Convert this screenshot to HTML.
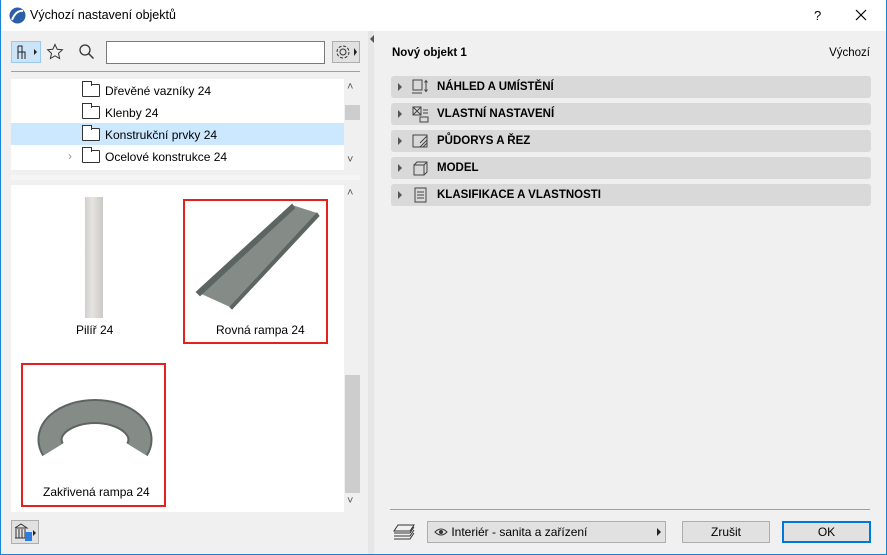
<!DOCTYPE html>
<html><head><meta charset="utf-8"><style>
*{margin:0;padding:0;box-sizing:border-box}
body{width:887px;height:555px;overflow:hidden;font-family:"Liberation Sans",sans-serif;font-size:12px;color:#000;background:#f0f0f0;position:relative}
.abs{position:absolute}
.row{position:absolute;left:391px;width:480px;height:22px;background:#d9d9d9;border-radius:3px}
.row .t{position:absolute;left:46px;top:5px;font-weight:bold;font-size:11.5px}
.row .a{position:absolute;left:7px;top:7px;width:0;height:0;border-left:4px solid #555;border-top:4px solid transparent;border-bottom:4px solid transparent}
.row svg{position:absolute;left:20px;top:2px}
.fold{position:absolute;left:82px;width:18px;height:13px;border:1px solid #333;border-radius:1px;background:#fff}
.fold:before{content:"";position:absolute;left:-1px;top:-4px;width:8px;height:4px;border:1px solid #333;border-bottom:none;background:#fff}
.lbl{position:absolute;left:105px}
.btn{position:absolute;top:521px;height:22px;background:#e1e1e1;border:1px solid #adadad;text-align:center;line-height:20px}
</style></head><body>
<div class="abs" style="left:0;top:0;width:887px;height:31px;background:#fff"></div>
<div class="abs" style="left:0;top:0;width:1px;height:555px;background:#1883d7"></div>
<div class="abs" style="right:0;top:0;width:1px;height:555px;background:#1883d7"></div>
<div class="abs" style="left:0;bottom:0;width:887px;height:1px;background:#1883d7"></div>
<svg class="abs" style="left:9px;top:7px" width="17" height="17"><circle cx="8.5" cy="8.5" r="8" fill="#2a5fa8"/><path d="M3 13 Q7 3 14 4" stroke="#fff" stroke-width="2" fill="none"/></svg>
<div class="abs" style="left:30px;top:8px;font-size:12.5px">Výchozí nastavení objektů</div>
<div class="abs" style="left:814px;top:8px;font-size:13px">?</div>
<svg class="abs" style="left:855px;top:9px" width="12" height="12"><path d="M1 1L11 11M11 1L1 11" stroke="#000" stroke-width="1.2"/></svg>

<div class="abs" style="left:11px;top:41px;width:30px;height:22px;background:#cce4f7;border:1px solid #99c9ef"></div>
<svg class="abs" style="left:15px;top:44px" width="24" height="16"><path d="M3 2h4v6h3v7M3 2v13M3 8h4v7" stroke="#222" fill="none"/><path d="M19 5l3 3-3 3z" fill="#222"/></svg>
<svg class="abs" style="left:46px;top:43px" width="18" height="18"><path d="M9 1.5l2.2 4.8 5.2.5-3.9 3.5 1.1 5.2L9 12.8 4.4 15.5l1.1-5.2L1.6 6.8l5.2-.5z" stroke="#333" fill="none"/></svg>
<svg class="abs" style="left:78px;top:43px" width="18" height="18"><circle cx="7" cy="7" r="5" stroke="#333" fill="none" stroke-width="1.3"/><path d="M10.5 10.5l5 5" stroke="#333" stroke-width="1.4"/></svg>
<div class="abs" style="left:106px;top:41px;width:219px;height:23px;background:#fff;border:1px solid #7a7a7a"></div>
<div class="abs" style="left:332px;top:41px;width:28px;height:22px;background:#e1e1e1;border:1px solid #adadad"></div>
<svg class="abs" style="left:334px;top:43px" width="26" height="18"><circle cx="9" cy="9" r="3" stroke="#333" fill="none"/><circle cx="9" cy="9" r="6" stroke="#333" fill="none" stroke-dasharray="3 1.7"/><path d="M20 5l3 4-3 4z" fill="#222"/></svg>
<div class="abs" style="left:11px;top:71px;width:349px;height:1px;background:#a0a0a0"></div>

<div class="abs" style="left:11px;top:79px;width:333px;height:91px;background:#fff"></div>
<div class="abs" style="left:11px;top:123px;width:333px;height:22px;background:#cce8ff"></div>
<div class="fold" style="top:84px"></div><div class="lbl" style="top:84px">Dřevěné vazníky 24</div>
<div class="fold" style="top:106px"></div><div class="lbl" style="top:106px">Klenby 24</div>
<div class="fold" style="top:128px"></div><div class="lbl" style="top:128px">Konstrukční prvky 24</div>
<div class="fold" style="top:150px"></div><div class="lbl" style="top:150px">Ocelové konstrukce 24</div>
<div class="abs" style="left:68px;top:149px;color:#999;font-size:12px">›</div>
<div class="abs" style="left:345px;top:105px;width:15px;height:15px;background:#cdcdcd"></div>
<div class="abs" style="left:347px;top:81px;color:#555;font-size:11px">˄</div>
<div class="abs" style="left:347px;top:154px;color:#555;font-size:11px">˅</div>
<div class="abs" style="left:11px;top:175px;width:349px;height:5px;background:#f5f5f5"></div>

<div class="abs" style="left:11px;top:185px;width:333px;height:327px;background:#fff"></div>
<div class="abs" style="left:345px;top:375px;width:15px;height:118px;background:#cdcdcd"></div>
<div class="abs" style="left:347px;top:187px;color:#555;font-size:11px">˄</div>
<div class="abs" style="left:347px;top:495px;color:#555;font-size:11px">˅</div>
<div class="abs" style="left:85px;top:197px;width:18px;height:121px;background:linear-gradient(90deg,#d2d0cc,#e6e4e0 40%,#cbc9c6)"></div>
<div class="abs" style="left:76px;top:323px">Pilíř 24</div>
<div class="abs" style="left:183px;top:199px;width:145px;height:145px;border:2px solid #e52020"></div>
<svg class="abs" style="left:190px;top:200px" width="135" height="110"><path d="M7 92L102 5 127 13 40 107z" fill="#858c88"/><path d="M7 92L102 5 104 8 10 95z" fill="#5d6562" stroke="#5d6562" stroke-width="2"/><path d="M40 107L127 13 129 16 42 109z" fill="#5d6562" stroke="#5d6562"/></svg>
<div class="abs" style="left:216px;top:323px">Rovná rampa 24</div>
<div class="abs" style="left:21px;top:363px;width:145px;height:144px;border:2px solid #e52020"></div>
<svg class="abs" style="left:0;top:363px" width="170" height="100"><path d="M53 86.6A45 28 0 1 1 137 86.6" stroke="#5d6562" stroke-width="25" fill="none"/><path d="M53 86.6A45 28 0 1 1 137 86.6" stroke="#858c88" stroke-width="21" fill="none"/></svg>
<div class="abs" style="left:43px;top:485px">Zakřivená rampa 24</div>

<div class="abs" style="left:11px;top:520px;width:28px;height:24px;background:#e1e1e1;border:1px solid #adadad"></div>
<svg class="abs" style="left:13px;top:522px" width="24" height="20"><path d="M2 6L8 2 14 6H2M3 7v9M6 7v9M9 7v9M12 7v9M2 16h12" stroke="#333" fill="none"/><rect x="12" y="10" width="7" height="9" fill="#2b7de0"/><path d="M20 8l3 3-3 3z" fill="#222"/></svg>

<div class="abs" style="left:368px;top:31px;width:6px;height:523px;background:#e6e6e6"></div>
<div class="abs" style="left:370px;top:35px;border-right:4px solid #555;border-top:4px solid transparent;border-bottom:4px solid transparent"></div>

<div class="abs" style="left:392px;top:47px;font-weight:bold;font-size:11.5px">Nový objekt 1</div>
<div class="abs" style="right:17px;top:47px;font-size:11.5px">Výchozí</div>
<div class="row" style="top:76px"><div class="a"></div><svg width="20" height="18"><rect x="2" y="2" width="9" height="10" stroke="#444" fill="none"/><path d="M1 15h10M15 3v10M13.5 4.5l1.5-2 1.5 2M13.5 11.5l1.5 2 1.5-2" stroke="#444" fill="none"/></svg><div class="t">NÁHLED A UMÍSTĚNÍ</div></div>
<div class="row" style="top:103px"><div class="a"></div><svg width="20" height="18"><rect x="2" y="2" width="8" height="8" stroke="#444" fill="none"/><path d="M2 2l8 8M10 2l-8 8M12 5h5M12 8h5M9 12h8v5H9z" stroke="#444" fill="none"/></svg><div class="t">VLASTNÍ NASTAVENÍ</div></div>
<div class="row" style="top:130px"><div class="a"></div><svg width="20" height="18"><rect x="2" y="3" width="14" height="12" stroke="#444" fill="none"/><path d="M9 15l7-7M12 15l4-4M9 11l7-7" stroke="#444"/></svg><div class="t">PŮDORYS A ŘEZ</div></div>
<div class="row" style="top:157px"><div class="a"></div><svg width="20" height="18"><path d="M3 6h10v10H3zM3 6l3-3h10v10l-3 3M13 6l3-3" stroke="#444" fill="none"/></svg><div class="t">MODEL</div></div>
<div class="row" style="top:184px"><div class="a"></div><svg width="20" height="18"><rect x="4" y="2" width="11" height="14" stroke="#444" fill="none"/><path d="M6 6h7M6 9h7M6 12h7" stroke="#444"/></svg><div class="t">KLASIFIKACE A VLASTNOSTI</div></div>

<div class="abs" style="left:390px;top:509px;width:480px;height:1px;background:#a0a0a0"></div>
<svg class="abs" style="left:393px;top:523px" width="24" height="18"><path d="M5 2h16l-4 6H1zM1 10h16l4-6M1 13h16l4-6M1 16h16l4-6" stroke="#333" fill="none"/></svg>
<div class="btn" style="left:427px;width:239px;text-align:left;padding-left:6px"><svg width="14" height="10" style="vertical-align:-1px"><path d="M1 5Q7-1 13 5Q7 11 1 5z" stroke="#333" fill="none"/><circle cx="7" cy="5" r="2" fill="#333"/></svg> Interiér - sanita a zařízení<span style="position:absolute;right:4px;top:6px;border-left:4px solid #222;border-top:4px solid transparent;border-bottom:4px solid transparent"></span></div>
<div class="btn" style="left:682px;width:88px">Zrušit</div>
<div class="btn" style="left:782px;width:89px;border:2px solid #0078d7;line-height:18px">OK</div>
</body></html>
